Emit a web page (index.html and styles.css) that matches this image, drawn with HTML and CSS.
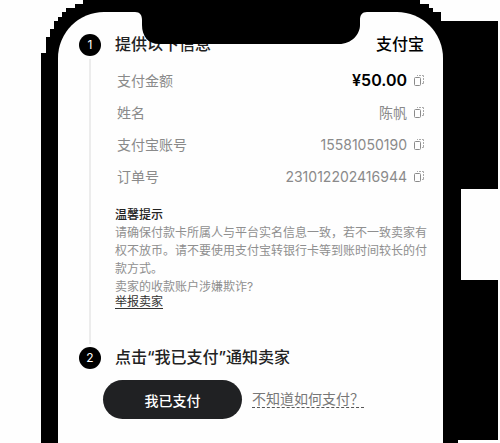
FILE: index.html
```
<!DOCTYPE html>
<html lang="zh-CN">
  <head>
    <meta charset="UTF-8" />
    <meta name="viewport" content="width=device-width, initial-scale=1.0" />
    <title>支付宝付款</title>
    <link rel="stylesheet" href="styles.css" />
  </head>
  <body>
    <svg width="0" height="0" class="sprite" aria-hidden="true">
      <symbol id="copy" viewBox="0 0 10 12">
        <rect x="0.5" y="3.5" width="6" height="8" rx="1" fill="none" stroke="#8a8a8a" />
        <path d="M3 1.5h1M5 1.5h2M8 1.5h1.5v1.500M9.500 4v2M9.500 7v2.500H8" fill="none" stroke="#a8a8a8" />
      </symbol>
    </svg>
    <div class="phone">
      <svg class="frame" viewBox="0 0 500 443" preserveAspectRatio="none" aria-hidden="true">
        <path d="M83 0H420V4H429V8H433V12H441V21H498V189H461V280H498V440H458V443H41V53H46V37H50V29H54V21H58V17H62V12H66V8H75V4H83Z" />
      </svg>
      <main class="screen">
        <svg class="notch" viewBox="0 0 232 32" aria-hidden="true">
          <path d="M0 0C5 0 7 3 7 8V13C7 24 13 32 24 32H204C217 32 225 22 225 13V8C225 3 227 0 232 0Z" />
        </svg>
        <section class="step">
          <div class="side">
            <span class="num">1</span>
            <span class="line"></span>
          </div>
          <div class="content">
            <div class="head">
              <h2>提供以下信息</h2>
              <strong>支付宝</strong>
            </div>
            <dl class="info">
              <div class="row">
                <dt>支付金额</dt>
                <dd class="price">¥50.00</dd>
                <dd><button class="copy" aria-label="复制支付金额"><svg><use href="#copy" /></svg></button></dd>
              </div>
              <div class="row">
                <dt>姓名</dt>
                <dd>陈帆</dd>
                <dd><button class="copy" aria-label="复制姓名"><svg><use href="#copy" /></svg></button></dd>
              </div>
              <div class="row">
                <dt>支付宝账号</dt>
                <dd>15581050190</dd>
                <dd><button class="copy" aria-label="复制支付宝账号"><svg><use href="#copy" /></svg></button></dd>
              </div>
              <div class="row">
                <dt>订单号</dt>
                <dd>231012202416944</dd>
                <dd><button class="copy" aria-label="复制订单号"><svg><use href="#copy" /></svg></button></dd>
              </div>
            </dl>
            <div class="tips">
              <h3>温馨提示</h3>
              <p>请确保付款卡所属人与平台实名信息一致，若不一致卖家有权不放币。请不要使用支付宝转银行卡等到账时间较长的付款方式。</p>
              <p>卖家的收款账户涉嫌欺诈?</p>
              <a href="#">举报卖家</a>
            </div>
          </div>
        </section>
        <section class="step">
          <div class="side">
            <span class="num">2</span>
          </div>
          <div class="content">
            <div class="head">
              <h2>点击“我已支付”通知卖家</h2>
            </div>
          </div>
        </section>
        <div class="actions">
          <button class="paid">我已支付</button>
          <a href="#" class="help">不知道如何支付？</a>
        </div>
      </main>
    </div>
  </body>
</html>
```
FILE: styles.css
```
* {
  box-sizing: border-box;
  margin: 0;
  padding: 0;
}
body {
  background-color: #fefefe;
  font-family: Inter, "Noto Sans CJK SC", sans-serif;
  color: #222;
}
button {
  border: none;
  background: none;
  font-family: inherit;
}
.sprite {
  position: absolute;
}
.phone {
  position: relative;
  display: flex;
  min-height: 100vh;
  padding: 12px 57px 0 58px;
}
/* black body of the phone, behind the screen */
.frame {
  position: absolute;
  top: 0;
  left: 0;
  width: 100%;
  height: 100%;
}
.screen {
  position: relative;
  flex: 1;
  padding: 22px 15px 20px 21px;
  border-radius: 46px 46px 0 0;
  background-color: #fefefe;
}
.notch {
  position: absolute;
  top: 0;
  left: 50%;
  width: 232px;
  height: 32px;
  transform: translateX(-50%);
}
.step {
  display: flex;
  gap: 14px;
}
.side {
  display: flex;
  flex-direction: column;
  align-items: center;
  width: 22px;
}
.num {
  width: 22px;
  height: 22px;
  border-radius: 50%;
  background-color: #000;
  color: #fff;
  font-size: 12px;
  line-height: 22px;
  text-align: center;
}
.line {
  flex: 1;
  width: 2px;
  margin: 3px 0;
  background-color: #ececec;
}
.content {
  flex: 1;
}
.head {
  display: flex;
  justify-content: space-between;
  padding-right: 4px;
  line-height: 20px;
}
.head h2,
.head strong {
  font-size: 16px;
  font-weight: 500;
}
.head strong {
  color: #000;
}
.info {
  padding: 10px 4px 0 2px;
}
.row {
  display: flex;
  align-items: center;
  height: 32px;
  font-size: 14px;
  color: #8a8a8a;
}
.row dt {
  flex: 1;
}
.row .price {
  font-size: 16px;
  font-weight: 600;
  color: #000;
}
.copy {
  display: block;
  margin-left: 7px;
}
.copy svg {
  display: block;
  width: 10px;
  height: 12px;
}
.tips {
  padding: 14px 0 39px;
  font-size: 12px;
  line-height: 18px;
  color: #8f8f8f;
}
.tips h3 {
  font-size: 12px;
  font-weight: 500;
  color: #222;
}
.tips a {
  display: block;
  line-height: 12px;
  color: #333;
  text-underline-offset: 2px;
}
.actions {
  display: flex;
  align-items: center;
  gap: 10px;
  padding: 11px 0 0 24px;
}
.paid {
  width: 139px;
  height: 39px;
  border-radius: 20px;
  background-color: #202123;
  color: #fff;
  font-size: 14px;
  font-weight: 500;
}
.help {
  border-bottom: 1px dashed #555;
  color: #777;
  font-size: 14px;
  line-height: 16px;
  text-decoration: none;
}
```
